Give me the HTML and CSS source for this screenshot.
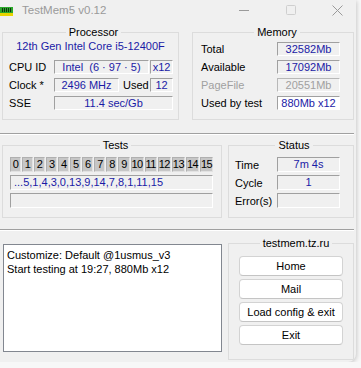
FILE: index.html
```html
<!DOCTYPE html>
<html lang="en">
<head>
    <meta charset="UTF-8">
    <title>TestMem5 v0.12</title>
    <link rel="stylesheet" href="styles.css">
</head>
<body>
    <div class="window">
        <div class="titlebar">
            <svg class="app-icon" width="13" height="9" viewBox="0 0 13 9">
                <rect x="0" y="0" width="13" height="6" fill="#2aa82a"/>
                <rect x="2" y="1" width="1" height="4" fill="#103010"/>
                <rect x="4" y="1" width="1" height="4" fill="#103010"/>
                <rect x="6" y="1" width="1" height="4" fill="#103010"/>
                <rect x="8" y="1" width="1" height="4" fill="#103010"/>
                <rect x="10" y="1" width="1" height="4" fill="#103010"/>
                <rect x="0" y="6" width="13" height="3" fill="#e8d400"/>
            </svg>
            <span class="title">TestMem5 v0.12</span>
            <div class="caption">
                <svg class="cap cap-min" width="11" height="11" viewBox="0 0 11 11"><line x1="0" y1="5.5" x2="10" y2="5.5" stroke="#9a9a9a" stroke-width="1"/></svg>
                <svg class="cap cap-max" width="11" height="11" viewBox="0 0 11 11"><rect x="0.5" y="0.5" width="9" height="9" fill="none" stroke="#cfcfcf" stroke-width="1" rx="1"/></svg>
                <svg class="cap cap-close" width="11" height="11" viewBox="0 0 11 11"><path d="M0.5 0.5 L10.5 10.5 M10.5 0.5 L0.5 10.5" stroke="#9a9a9a" stroke-width="1"/></svg>
            </div>
        </div>

        <div class="section top">
            <fieldset class="group processor">
                <legend>Processor</legend>
                <div class="cpu-name">12th Gen Intel Core i5-12400F</div>
                <div class="rows">
                    <div class="prow">
                        <span class="lbl">CPU ID</span>
                        <span class="field w-id">Intel&nbsp; (6 · 97 · 5)</span>
                        <span class="field w-x">x12</span>
                    </div>
                    <div class="prow">
                        <span class="lbl">Clock *</span>
                        <span class="field w-clock">2496 MHz</span>
                        <span class="lbl-used">Used</span>
                        <span class="field w-x">12</span>
                    </div>
                    <div class="prow">
                        <span class="lbl">SSE</span>
                        <span class="field w-sse">11.4 sec/Gb</span>
                    </div>
                </div>
            </fieldset>

            <fieldset class="group memory">
                <legend>Memory</legend>
                <div class="rows mem-rows">
                    <div class="mrow"><span class="mlbl">Total</span><span class="field w-mem">32582Mb</span></div>
                    <div class="mrow"><span class="mlbl">Available</span><span class="field w-mem">17092Mb</span></div>
                    <div class="mrow disabled"><span class="mlbl">PageFile</span><span class="field w-mem">20551Mb</span></div>
                    <div class="mrow"><span class="mlbl">Used by test</span><span class="field w-mem white">880Mb x12</span></div>
                </div>
            </fieldset>
        </div>

        <div class="separator"></div>

        <div class="section middle">
            <fieldset class="group tests">
                <legend>Tests</legend>
                <div class="cells">
                    <span>0</span><span>1</span><span>2</span><span>3</span>
                    <span>4</span><span>5</span><span>6</span><span>7</span>
                    <span>8</span><span>9</span><span>10</span><span>11</span>
                    <span>12</span><span>13</span><span>14</span><span>15</span>
                </div>
                <div class="field seq">...5,1,4,3,0,13,9,14,7,8,1,11,15</div>
                <div class="field progress"></div>
            </fieldset>

            <fieldset class="group status">
                <legend>Status</legend>
                <div class="srow"><span class="slbl">Time</span><span class="field w-stat">7m 4s</span></div>
                <div class="srow"><span class="slbl">Cycle</span><span class="field w-stat">1</span></div>
                <div class="srow"><span class="slbl">Error(s)</span><span class="field w-stat"></span></div>
            </fieldset>
        </div>

        <div class="separator sep2"></div>

        <div class="section bottom">
            <div class="log">
                <div>Customize: Default @1usmus_v3</div>
                <div>Start testing at 19:27, 880Mb x12</div>
            </div>
            <fieldset class="group links">
                <legend>testmem.tz.ru</legend>
                <button class="btn">Home</button>
                <button class="btn">Mail</button>
                <button class="btn">Load config &amp; exit</button>
                <button class="btn">Exit</button>
            </fieldset>
        </div>
    </div>
</body>
</html>
```

FILE: styles.css
```css
body {
    margin: 0;
    background-color: #f7f7f7;
    font-family: 'Liberation Sans', Arial, sans-serif;
    font-size: 11px;
    color: #000;
}
.window {
    width: 356px;
    height: 362px;
    background-color: #f0f0f0;
    border-bottom-right-radius: 8px;
    box-shadow: 1px 1px 4px rgba(0, 0, 0, 0.18);
    overflow: hidden;
}

/* title bar */
.titlebar {
    height: 20px;
    display: flex;
    align-items: center;
}
.app-icon {
    margin-left: 0;
    margin-top: 2px;
}
.title {
    margin-left: 9px;
    font-size: 11.5px;
    color: #9a9a9a;
}
.caption {
    margin-left: auto;
    display: flex;
    align-items: center;
}
.cap-min {
    margin-right: 36px;
}
.cap-max {
    margin-right: 35px;
}
.cap-close {
    margin-right: 13px;
}

/* group boxes */
.section {
    display: flex;
    padding-left: 2px;
}
.group {
    margin: 0;
    padding: 0;
    border: 1px solid #dcdcdc;
    min-inline-size: 0;
}
.group legend {
    margin: 0 auto;
    padding: 0 3px;
    line-height: 14px;
}
.field {
    box-sizing: border-box;
    height: 14px;
    line-height: 12px;
    border-top: 1px solid #a0a0a0;
    border-left: 1px solid #a0a0a0;
    border-right: 1px solid #ffffff;
    border-bottom: 1px solid #ffffff;
    color: #1a1aa6;
    text-align: center;
    white-space: nowrap;
}
.field.white {
    background-color: #ffffff;
}

/* processor + memory */
.top {
    padding-top: 5px;
}
.processor {
    width: 177px;
    box-sizing: border-box;
    padding: 0 0 9px 6px;
}
.cpu-name {
    color: #1a1aa6;
    text-align: center;
    line-height: 14px;
    padding-right: 6px;
}
.rows {
    display: flex;
    flex-direction: column;
    gap: 4px;
    margin-top: 7px;
}
.prow {
    display: flex;
    align-items: center;
}
.lbl {
    width: 45px;
}
.w-id {
    width: 95px;
    margin-right: 1px;
}
.w-x {
    width: 23px;
}
.w-clock {
    width: 65px;
}
.lbl-used {
    width: 31px;
    padding-left: 4px;
    box-sizing: border-box;
}
.w-sse {
    width: 119px;
}
.memory {
    width: 162px;
    box-sizing: border-box;
    margin-left: 13px;
    padding: 0 0 9px 8px;
}
.mem-rows {
    margin-top: 3px;
}
.mrow {
    display: flex;
    align-items: center;
}
.mlbl {
    width: 76px;
}
.w-mem {
    width: 63px;
}
.disabled .mlbl,
.disabled .field {
    color: #a0a0a0;
}
.disabled .field {
    border-top-color: #b8b8b8;
    border-left-color: #b8b8b8;
}

.separator {
    width: 354px;
    height: 1px;
    background-color: #a0a0a0;
    border-bottom: 1px solid #ffffff;
    margin-top: 13px;
}
.sep2 {
    margin-top: 11px;
}

/* tests + status */
.middle {
    margin-top: 3px;
}
.tests {
    width: 220px;
    box-sizing: border-box;
    padding: 0 0 9px 7px;
}
.cells {
    display: grid;
    grid-template-columns: repeat(16, 1fr);
    gap: 1px;
    width: 203px;
    margin-top: 5px;
}
.cells span {
    box-sizing: border-box;
    height: 15px;
    line-height: 13px;
    background-color: #c6c6c6;
    border-top: 1px solid #b0b0b0;
    border-left: 1px solid #b0b0b0;
    border-right: 1px solid #e2e2e2;
    border-bottom: 1px solid #e2e2e2;
    text-align: center;
    letter-spacing: -0.6px;
    overflow: visible;
}
.seq,
.progress {
    width: 203px;
    height: 15px;
    line-height: 13px;
    margin-top: 3px;
}
.seq {
    text-align: left;
    padding-left: 3px;
}
.status {
    width: 126px;
    box-sizing: border-box;
    margin-left: 6px;
    padding: 0 0 9px 6px;
}
.srow {
    display: flex;
    align-items: center;
    margin-top: 3px;
}
.srow:first-of-type {
    margin-top: 5px;
}
.slbl {
    width: 42px;
}
.w-stat {
    width: 63px;
    height: 15px;
    line-height: 13px;
}

/* log + links */
.bottom {
    padding-left: 3px;
    margin-top: 5px;
}
.log {
    box-sizing: border-box;
    width: 219px;
    height: 108px;
    margin-top: 8px;
    padding: 3px 3px;
    background-color: #ffffff;
    border: 1px solid #828790;
    line-height: 14px;
}
.links {
    width: 126px;
    height: 124px;
    box-sizing: border-box;
    margin-left: 6px;
    padding: 0 0 0 10px;
    display: flex;
    flex-direction: column;
    gap: 3px;
}
.links legend {
    margin-bottom: 6px;
}
.btn {
    box-sizing: border-box;
    width: 104px;
    height: 20px;
    padding: 0;
    background-color: #ffffff;
    border: 1px solid #d3d3d3;
    border-bottom-color: #c4c4c4;
    border-radius: 4px;
    font-family: 'Liberation Sans', Arial, sans-serif;
    font-size: 11px;
    color: #000;
}
```
